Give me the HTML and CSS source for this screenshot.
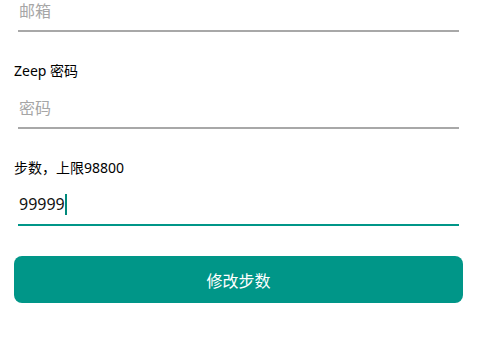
FILE: index.html
```html
<!DOCTYPE html>
<html lang="zh-CN">
<head>
<meta charset="utf-8">
<title>修改步数</title>
<link rel="stylesheet" href="styles.css">
</head>
<body>
<div class="form">
  <div class="field first">
    <div class="input"><span class="placeholder">邮箱</span></div>
  </div>
  <div class="field">
    <div class="label">Zeep 密码</div>
    <div class="input"><span class="placeholder">密码</span></div>
  </div>
  <div class="field">
    <div class="label">步数，上限98800</div>
    <div class="input focused"><span class="value">99999</span><span class="caret"></span></div>
  </div>
  <button class="submit">修改步数</button>
</div>
</body>
</html>
```
FILE: styles.css
```css
html, body {
  margin: 0;
  padding: 0;
  background: #ffffff;
}
body {
  font-family: "Noto Sans", "Noto Sans CJK SC", sans-serif;
  color: #000000;
}
.form {
  display: flex;
  flex-direction: column;
  padding: 0 20px 0 14px;
  margin-top: -8px;
}
.field {
  display: flex;
  flex-direction: column;
  gap: 8px;
  margin-bottom: 29px;
}
.label {
  font-size: 14px;
  line-height: 20px;
  height: 20px;
}
.input {
  height: 36px;
  padding: 0 0 2px 1px;
  margin: 0 4px 0 4px;
  border-bottom: 2px solid #a8a8a8;
  display: flex;
  align-items: center;
  font-size: 16px;
}
.input.focused {
  border-bottom-color: #009688;
}
.placeholder {
  color: #a6a6a6;
}
.value {
  color: #111111;
}
.caret {
  display: inline-block;
  width: 2px;
  height: 21px;
  background: #00897b;
}
.submit {
  margin: 1px 0 0 0;
  width: 449px;
  height: 47px;
  border: none;
  border-radius: 8px;
  background: #009688;
  color: #ffffff;
  font-family: "Noto Sans", "Noto Sans CJK SC", sans-serif;
  font-size: 16px;
  padding: 0;
}
```
